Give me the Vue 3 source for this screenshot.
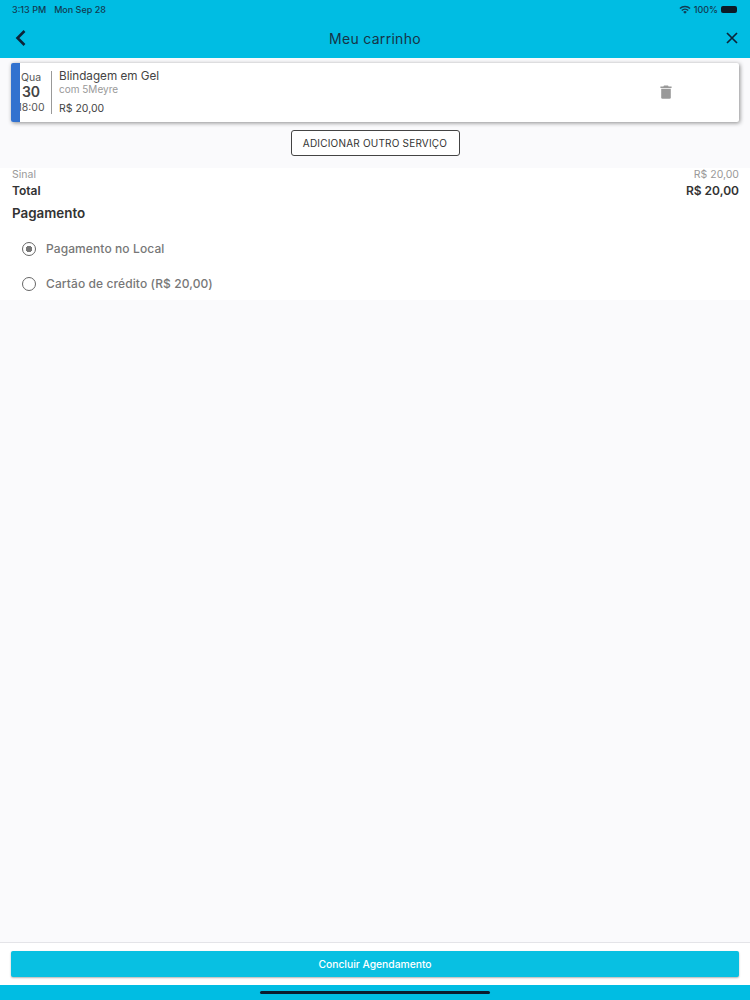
<template>
  <div class="page">
    <header class="top">
      <div class="status">
        <div class="status-left">
          <span>3:13 PM</span>
          <span>Mon Sep 28</span>
        </div>
        <div class="status-right">
          <svg width="12" height="9" viewBox="0 0 12 9">
            <path d="M0.4 3.1A8 8 0 0 1 11.6 3.1L10.6 4.1A6.6 6.6 0 0 0 1.4 4.1Z" fill="#123a52" />
            <path d="M2.3 5A5.3 5.3 0 0 1 9.7 5L8.7 6A3.9 3.9 0 0 0 3.3 6Z" fill="#123a52" />
            <path d="M4.2 6.9A2.6 2.6 0 0 1 7.8 6.9L6 8.8Z" fill="#123a52" />
          </svg>
          <span>100%</span>
          <div class="battery"></div>
        </div>
      </div>
      <div class="nav">
        <svg class="back" width="12" height="18" viewBox="0 0 12 18">
          <path d="M9.5 2L2.5 9L9.5 16" fill="none" stroke="#0c2438" stroke-width="2.6" />
        </svg>
        <h1>Meu carrinho</h1>
        <svg class="close" width="12" height="12" viewBox="0 0 12 12">
          <path d="M1 1L11 11M11 1L1 11" fill="none" stroke="#0c2438" stroke-width="1.7" />
        </svg>
      </div>
    </header>

    <main class="content">
      <div class="card">
        <div class="card-bar"></div>
        <div class="date">
          <span class="weekday">Qua</span>
          <span class="day">30</span>
          <span class="hour">18:00</span>
        </div>
        <div class="info">
          <span class="service">Blindagem em Gel</span>
          <span class="staff">com 5Meyre</span>
          <span class="price">R$ 20,00</span>
        </div>
        <svg class="trash" width="12" height="14" viewBox="0 0 12 14">
          <path d="M4 0.5H8L8.6 1.5H11.6V3H0.4V1.5H3.4Z" fill="#999" />
          <path d="M1.2 3.8H10.8V12.4A1.3 1.3 0 0 1 9.5 13.7H2.5A1.3 1.3 0 0 1 1.2 12.4Z" fill="#999" />
        </svg>
      </div>

      <div class="add-row">
        <button class="add-btn">ADICIONAR OUTRO SERVIÇO</button>
      </div>

      <section class="summary">
        <div class="line small">
          <span>Sinal</span>
          <span>R$ 20,00</span>
        </div>
        <div class="line total">
          <span>Total</span>
          <span>R$ 20,00</span>
        </div>
        <h2>Pagamento</h2>
        <label v-for="opt in options" :key="opt.label" class="option">
          <span class="radio" :class="{ on: opt.checked }"></span>
          <span>{{ opt.label }}</span>
        </label>
      </section>
    </main>

    <footer class="bottom">
      <div class="actions">
        <button class="finish">Concluir Agendamento</button>
      </div>
      <div class="home-strip">
        <div class="home-bar"></div>
      </div>
    </footer>
  </div>
</template>

<script setup>
const options = [
  { label: 'Pagamento no Local', checked: true },
  { label: 'Cartão de crédito (R$ 20,00)', checked: false }
]
</script>

<style scoped>
.page {
  width: 750px;
  height: 1000px;
  display: flex;
  flex-direction: column;
  background: #fafafc;
  font-family: Inter, "Liberation Sans", sans-serif;
  overflow: hidden;
}

.top {
  height: 58px;
  background: #00bde3;
  color: #123a52;
  flex-shrink: 0;
}

.status {
  height: 18px;
  padding: 0 13px 0 12px;
  display: flex;
  justify-content: space-between;
  align-items: center;
  font-size: 9px;
  font-weight: 500;
}

.status-left {
  display: flex;
  gap: 8px;
}

.status-right {
  display: flex;
  align-items: center;
  gap: 3px;
}

.battery {
  width: 16px;
  height: 7px;
  background: #0c1a26;
  border-radius: 2px;
}

.nav {
  height: 40px;
  padding: 0 12px 0 15px;
  display: flex;
  align-items: center;
  justify-content: space-between;
}

.nav h1 {
  margin: 0 3px 0 0;
  font-size: 14px;
  font-weight: 400;
  color: #173347;
  letter-spacing: 0.3px;
}

.content {
  flex: 1;
  padding-top: 5px;
}

.card {
  position: relative;
  height: 59px;
  margin: 0 11px;
  display: flex;
  align-items: center;
  background: #fff;
  border-radius: 2px;
  box-shadow: 1px 1px 4px rgba(0, 0, 0, 0.45);
  overflow: hidden;
}

.card-bar {
  position: absolute;
  left: 0;
  top: 0;
  bottom: 0;
  width: 9px;
  background: #3272cf;
}

.date {
  width: 40px;
  height: 43px;
  flex-shrink: 0;
  margin-top: -1px;
  display: flex;
  flex-direction: column;
  align-items: center;
  justify-content: space-between;
  border-right: 1px solid #999;
  color: #555;
  font-size: 10.5px;
  line-height: 13px;
  white-space: nowrap;
}

.day {
  font-size: 14px;
  font-weight: 600;
  color: #444;
  line-height: 16px;
}

.info {
  flex: 1;
  height: 46px;
  margin-top: -1px;
  padding-left: 7px;
  display: flex;
  flex-direction: column;
  color: #444;
}

.service {
  font-size: 11.7px;
  line-height: 14px;
}

.staff {
  font-size: 10px;
  line-height: 13px;
  color: #999;
}

.price {
  margin-top: auto;
  font-size: 10.5px;
  line-height: 13px;
}

.trash {
  margin-right: 67px;
  margin-top: -2px;
}

.add-row {
  display: flex;
  justify-content: center;
  padding: 8px 0 12px;
}

.add-btn {
  width: 169px;
  height: 26px;
  padding: 0;
  background: #fff;
  border: 1px solid #444;
  border-radius: 3px;
  color: #333;
  font-family: inherit;
  font-size: 10px;
  letter-spacing: 0.2px;
}

.summary {
  height: 132px;
  padding: 0 11px 0 12px;
  background: #fff;
}

.line {
  display: flex;
  justify-content: space-between;
}

.small {
  height: 13px;
  font-size: 10.5px;
  line-height: 13px;
  color: #999;
}

.total {
  margin-top: 3px;
  font-size: 12px;
  line-height: 14px;
  font-weight: 600;
  color: #333;
}

.summary h2 {
  margin: 7px 0 0;
  font-size: 13.4px;
  line-height: 16px;
  font-weight: 600;
  color: #333;
}

.option {
  height: 35px;
  padding-left: 10px;
  display: flex;
  align-items: center;
  gap: 10px;
  font-size: 12px;
  letter-spacing: 0.1px;
  font-weight: 500;
  color: #777;
}

.summary h2 + .option {
  margin-top: 10px;
}

.radio {
  width: 14px;
  height: 14px;
  box-sizing: border-box;
  border: 1.7px solid #666;
  border-radius: 50%;
  flex-shrink: 0;
}

.radio.on {
  background: radial-gradient(circle, #777 0 3px, transparent 3.5px);
}

.bottom {
  flex-shrink: 0;
}

.actions {
  height: 43px;
  box-sizing: border-box;
  padding: 8px 11px 0;
  background: #fff;
  border-top: 1px solid #e4e4e8;
}

.finish {
  width: 100%;
  height: 26px;
  padding: 0;
  background: #08c0e2;
  border: none;
  border-radius: 2px;
  box-shadow: 0 1px 2px rgba(0, 0, 0, 0.3);
  color: #fff;
  font-family: inherit;
  font-size: 10.3px;
  font-weight: 500;
}

.home-strip {
  height: 15px;
  background: #00bde3;
  display: flex;
  justify-content: center;
  padding-top: 6px;
  box-sizing: border-box;
}

.home-bar {
  width: 230px;
  height: 3px;
  border-radius: 2px;
  background: #0a1c2e;
}
</style>
